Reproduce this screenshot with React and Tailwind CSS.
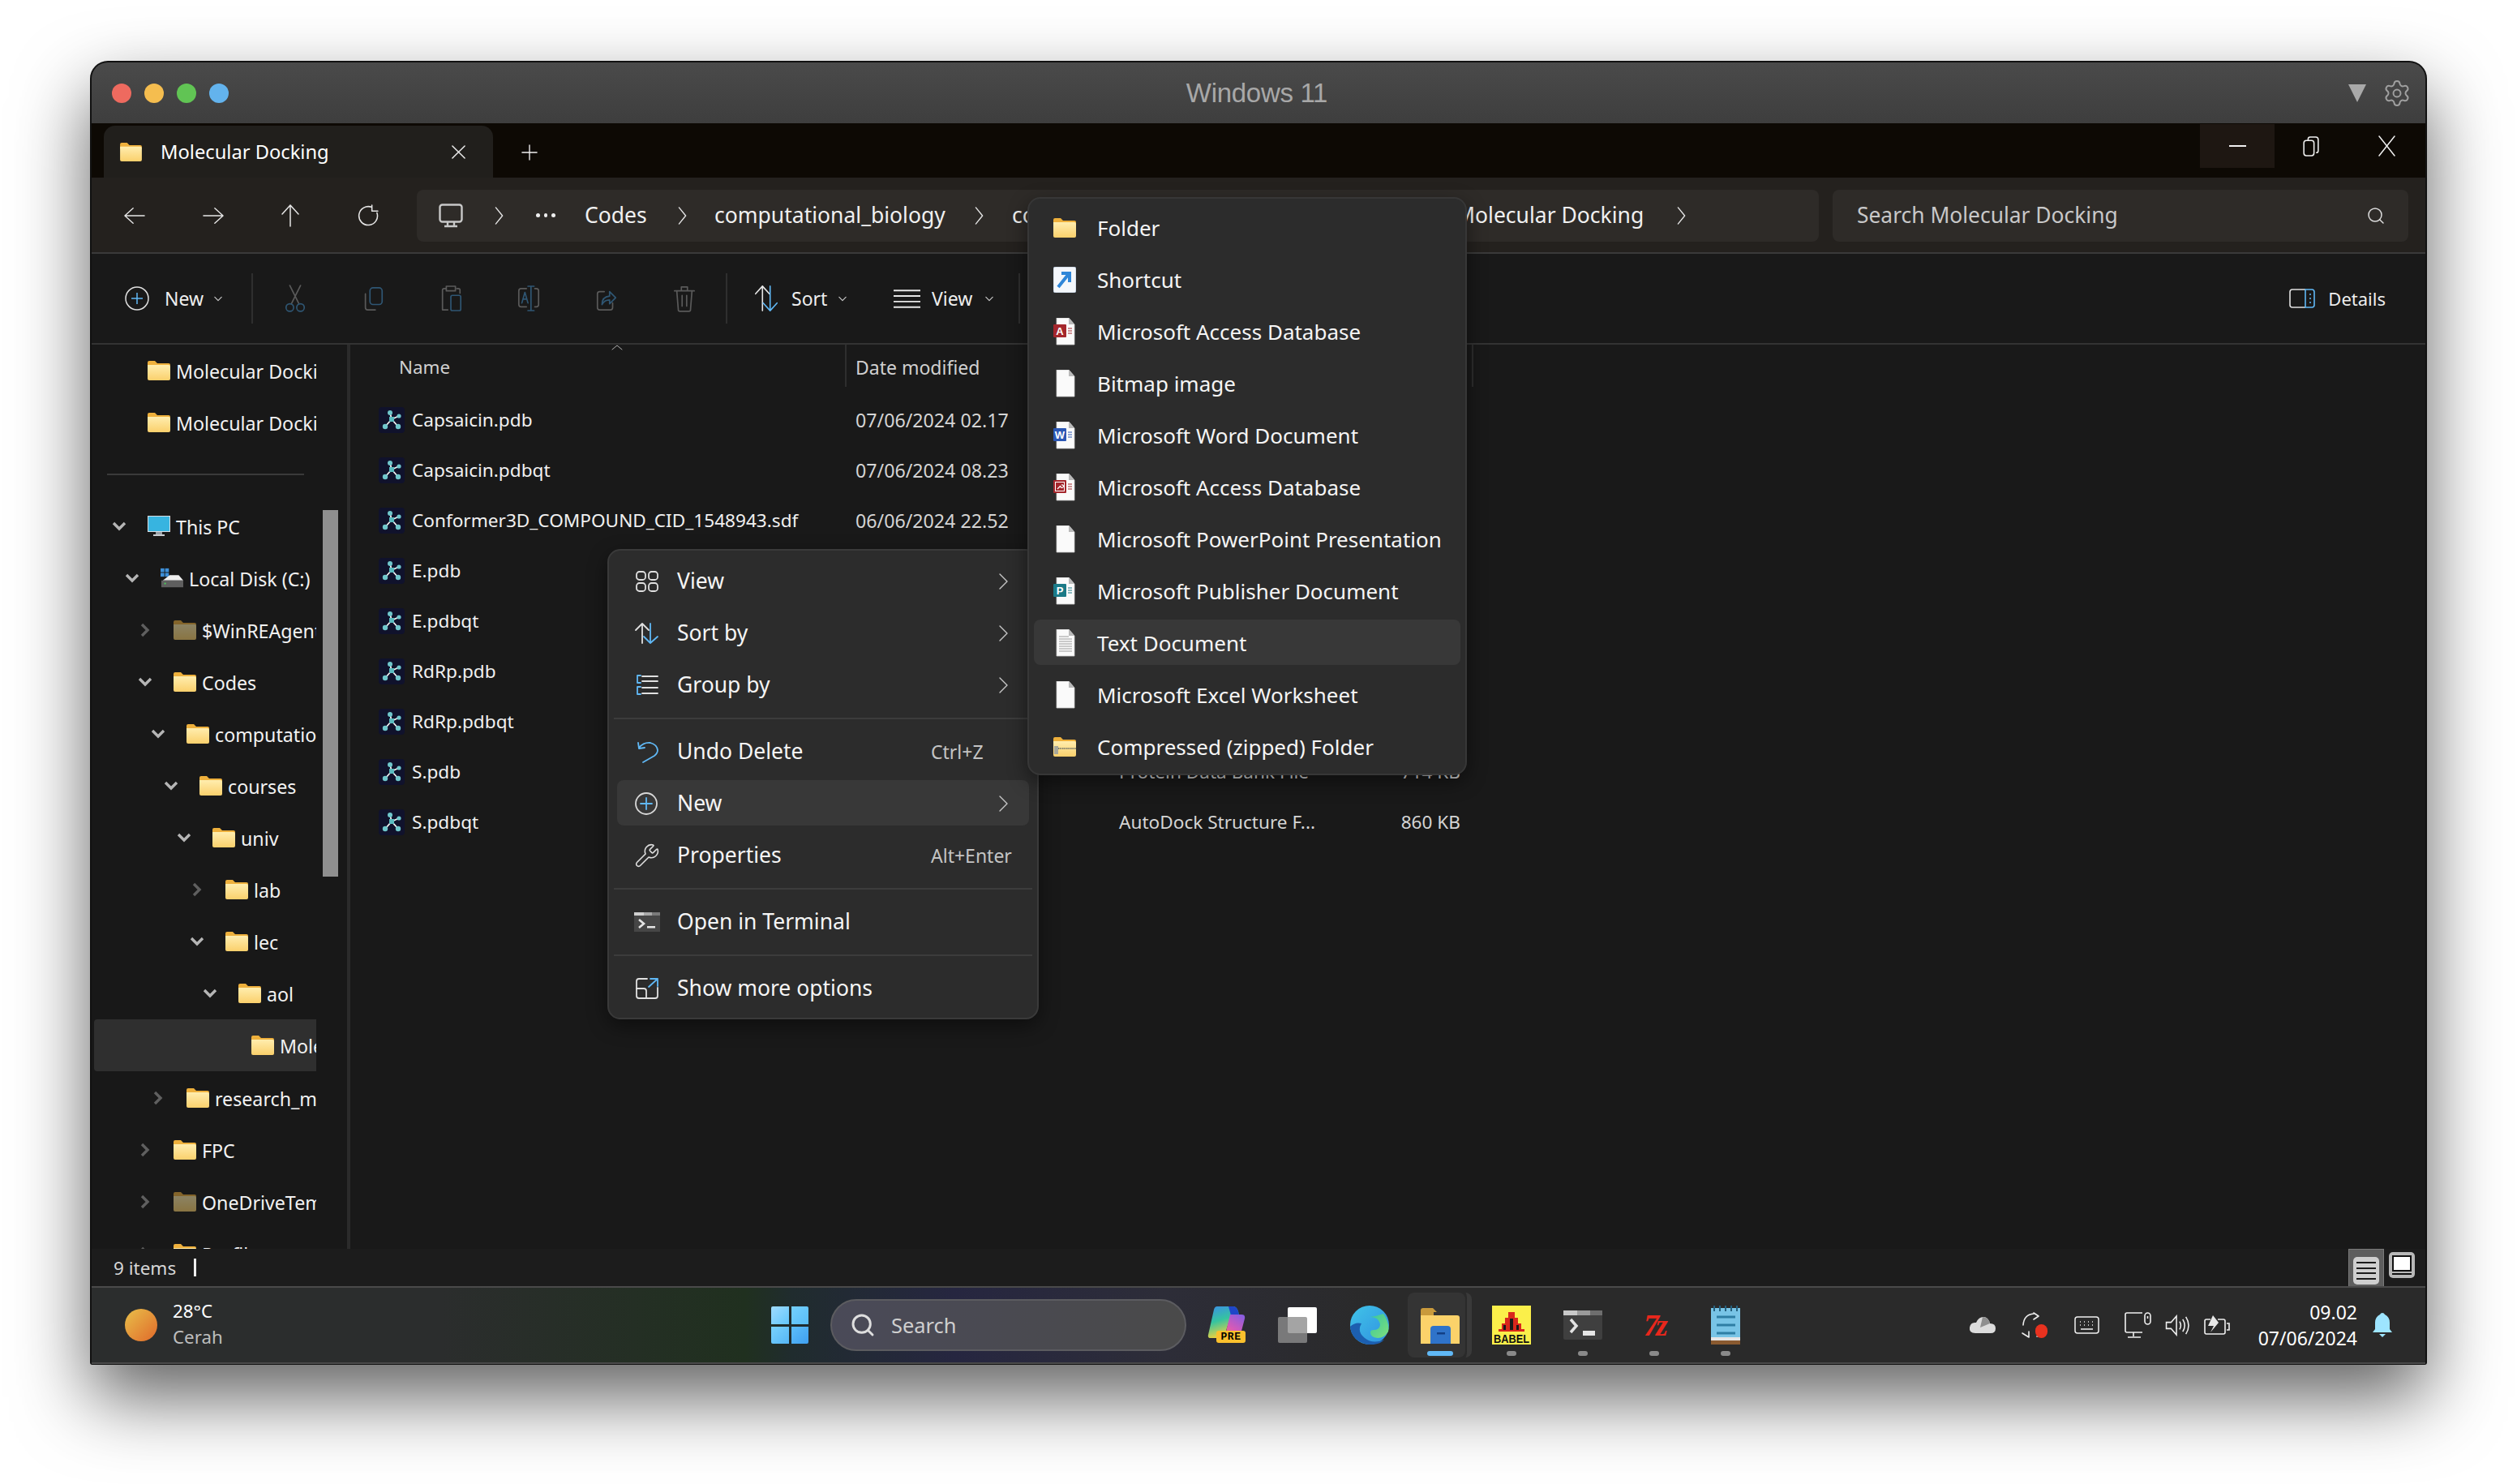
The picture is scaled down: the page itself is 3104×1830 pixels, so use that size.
import { Settings, Search, Wrench } from 'lucide-react';

const blue = '#60b8f5';
const dimA = '#5a5a5a';
const dimB = '#2f5673';

function Folder({ className = 'w-[28px] h-[24px]', dim = false }) {
  return (
    <svg viewBox="0 0 28 24" className={`${className} shrink-0 ${dim ? 'opacity-50' : ''}`}>
      <defs>
        <linearGradient id="fold" x1="0" y1="0" x2="0" y2="1">
          <stop offset="0" stopColor="#ffedae" />
          <stop offset="1" stopColor="#fad06c" />
        </linearGradient>
      </defs>
      <path d="M0 2q0-2 2-2h7l3 3h14q2 0 2 2v3H0z" fill="#eeb03c" />
      <path d="M0 5h26q2 0 2 2v15q0 2-2 2H2q-2 0-2-2z" fill="url(#fold)" />
    </svg>
  );
}

function Chevron({ open, dim }) {
  return (
    <svg viewBox="0 0 24 24" className="w-[24px] h-[24px] shrink-0" fill="none" stroke={dim ? '#5f5f5f' : '#b5b5b5'} strokeWidth="3.4">
      {open ? <path d="M5 8l7 7 7-7" /> : <path d="M8 5l7 7-7 7" />}
    </svg>
  );
}

function Line({ d, color = '#e6e6e6', w = 1.5, className = 'w-[28px] h-[28px]', vb = '0 0 28 28' }) {
  return (
    <svg viewBox={vb} className={`${className} shrink-0`} fill="none" stroke={color} strokeWidth={w} strokeLinecap="round" strokeLinejoin="round">
      <path d={d} />
    </svg>
  );
}

function SmallChev() {
  return <Line d="M1 1l5 5 5-5" vb="0 0 12 7" className="w-[10px] h-[7px]" color="#c8c8c8" w={1.4} />;
}

function Molecule() {
  return (
    <svg viewBox="0 0 32 32" className="w-[32px] h-[32px] shrink-0">
      <rect width="32" height="32" rx="4" fill="#10122c" />
      <path d="M16 15L14 7M16 15L25 11M16 15L8 24M16 15L24 24" stroke="#f3f3f3" strokeWidth="1.8" />
      <circle cx="14" cy="7" r="3" fill="#6fc7cc" />
      <circle cx="25" cy="11" r="2.6" fill="#6fc7cc" />
      <circle cx="8" cy="24" r="3.2" fill="#6fc7cc" />
      <circle cx="24" cy="24" r="3.2" fill="#6fc7cc" />
      <rect x="13" y="12" width="6" height="6" fill="#5bbcc0" />
    </svg>
  );
}

function Page({ badge, badgeColor, lines }) {
  return (
    <svg viewBox="0 0 28 34" className="w-[28px] h-[34px] shrink-0">
      <path d="M4 0h15l7 8v25H4z" fill="#fafafa" stroke="#c9c9c9" strokeWidth="0.8" />
      <path d="M19 0l7 8h-7z" fill="#b9b9b9" />
      {lines && <path d="M7 9h12M7 12h16M7 15h16M7 18h16M7 21h16M7 24h16M7 27h16" stroke="#9a9a9a" strokeWidth="1" />}
      {badge && (
        <>
          <path d="M18 13h5M18 16h5M18 19h5" stroke={badgeColor} strokeWidth="1.2" />
          <rect x="0" y="8" width="16" height="16" rx="1" fill={badgeColor} />
          <text x="8" y="21" textAnchor="middle" fontSize="13" fontWeight="700" fill="#fff" fontFamily="Liberation Sans, sans-serif">{badge}</text>
        </>
      )}
    </svg>
  );
}

function AccessKey() {
  return (
    <svg viewBox="0 0 28 34" className="w-[28px] h-[34px] shrink-0">
      <path d="M4 0h15l7 8v25H4z" fill="#fafafa" stroke="#c9c9c9" strokeWidth="0.8" />
      <path d="M19 0l7 8h-7z" fill="#b9b9b9" />
      <path d="M18 13h5M18 16h5M18 19h5" stroke="#a4262c" strokeWidth="1.2" />
      <rect x="0" y="8" width="16" height="16" rx="1" fill="#a4262c" />
      <rect x="2.5" y="10.5" width="11" height="11" fill="none" stroke="#fff" strokeWidth="1" />
      <path d="M5 19l4-4m0 0a1.8 1.8 0 1 0 1-1" stroke="#fff" strokeWidth="1.2" fill="none" />
    </svg>
  );
}

function Shortcut() {
  return (
    <svg viewBox="0 0 28 32" className="w-[28px] h-[32px] shrink-0">
      <rect width="28" height="32" rx="3" fill="#f4f7fb" stroke="#b9c7d8" />
      <path d="M6 25L18 10M10 8h10v11" fill="none" stroke="#2f86d8" strokeWidth="4" />
    </svg>
  );
}

function ZipFolder() {
  return (
    <div className="relative">
      <Folder className="w-[28px] h-[24px]" />
      <svg viewBox="0 0 28 10" className="absolute left-0 top-[11px] w-[28px] h-[10px]">
        <path d="M6 3h22" stroke="#7a7a6a" strokeWidth="2" strokeDasharray="1.5 1" />
        <rect x="1" y="0" width="5" height="10" fill="#a7a79a" />
      </svg>
    </div>
  );
}

const tree = [
  ['Molecular Docking', 0, null],
  ['Molecular Docking', 0, null],
  'sep',
  ['This PC', 0, 'open', 'pc'],
  ['Local Disk (C:)', 1, 'open', 'disk'],
  ['$WinREAgent', 2, 'closed', 'dim'],
  ['Codes', 2, 'open'],
  ['computational_biology', 3, 'open'],
  ['courses', 4, 'open'],
  ['univ', 5, 'open'],
  ['lab', 6, 'closed'],
  ['lec', 6, 'open'],
  ['aol', 7, 'open'],
  ['Molecular Docking', 8, null, 'sel'],
  ['research_methods', 3, 'closed'],
  ['FPC', 2, 'closed'],
  ['OneDriveTemp', 2, 'closed', 'dim'],
  ['Profiles', 2, 'closed'],
];

function TreeRow({ label, depth, state, kind }) {
  return (
    <div
      className={`flex items-center h-[64px] text-[23.2px] whitespace-nowrap text-[#f2f2f2] overflow-hidden w-[274px] ml-[3px] ${kind === 'sel' ? 'bg-[#2f2f2f] h-[63px] mb-[1px] rounded-l-[4px]' : ''}`}
      style={{ paddingLeft: 19 + depth * 16 }}
    >
      <div className="w-[24px] h-[24px] shrink-0">{state && <Chevron open={state === 'open'} dim={state === 'closed'} />}</div>
      <div className="ml-[23px] mr-[7px] shrink-0">
        {kind === 'pc' && (
          <svg viewBox="0 0 28 26" className="w-[28px] h-[26px]">
            <rect width="28" height="20" fill="#d8dde2" />
            <rect x="1" y="1" width="26" height="18" fill="#37b4e0" />
            <rect x="10" y="20" width="8" height="3" fill="#9aa0a6" />
            <rect x="7" y="23" width="14" height="2" fill="#c8ccd0" />
          </svg>
        )}
        {kind === 'disk' && (
          <svg viewBox="0 0 30 26" className="w-[28px] h-[26px]">
            <rect x="0" y="0" width="5" height="5" fill="#3d8fd8" />
            <rect x="6" y="0" width="5" height="5" fill="#3d8fd8" />
            <rect x="0" y="6" width="5" height="5" fill="#3d8fd8" />
            <rect x="6" y="6" width="5" height="5" fill="#3d8fd8" />
            <path d="M3 16l9-7h12l6 7z" fill="#efefef" />
            <rect x="1" y="16" width="29" height="9" fill="#5f5f5f" />
            <circle cx="6" cy="20" r="1.2" fill="#48d05a" />
          </svg>
        )}
        {(kind === undefined || kind === 'dim' || kind === 'sel') && <Folder dim={kind === 'dim'} />}
      </div>
      <span className="pt-[2px]">{label}</span>
    </div>
  );
}

const files = [
  ['Capsaicin.pdb', '07/06/2024 02.17'],
  ['Capsaicin.pdbqt', '07/06/2024 08.23'],
  ['Conformer3D_COMPOUND_CID_1548943.sdf', '06/06/2024 22.52'],
  ['E.pdb'],
  ['E.pdbqt'],
  ['RdRp.pdb'],
  ['RdRp.pdbqt'],
  ['S.pdb', '', 'Protein Data Bank File', '714 KB'],
  ['S.pdbqt', '', 'AutoDock Structure F...', '860 KB'],
];

function ToolIcon({ children, w = 'w-[96px]' }) {
  return <div className={`${w} h-[44px] flex items-center justify-center shrink-0`}>{children}</div>;
}

function ToolSvg({ children }) {
  return (
    <svg viewBox="0 0 32 36" className="w-[30px] h-[34px]" fill="none" strokeWidth="1.8" strokeLinecap="round" strokeLinejoin="round">
      {children}
    </svg>
  );
}

function MenuRow({ icon, label, hint, more, active }) {
  return (
    <div className={`flex items-center h-[64px] ${active ? 'relative' : ''}`}>
      {active && <div className="absolute left-[10px] right-[10px] top-[3px] bottom-[5px] bg-[#383838] rounded-[8px]" />}
      <div className="relative w-[32px] ml-[31px] flex justify-center shrink-0">{icon}</div>
      <span className="relative ml-[21px] text-[26.5px] text-[#f5f5f5] whitespace-nowrap">{label}</span>
      {hint && <span className="absolute left-[397px] text-[23px] text-[#c4c4c4] whitespace-nowrap">{hint}</span>}
      {more && (
        <div className="absolute left-[481px]">
          <Line d="M1 1l9 9-9 9" vb="0 0 11 20" className="w-[11px] h-[20px]" color="#c8c8c8" w={1.4} />
        </div>
      )}
    </div>
  );
}

function MenuIconSvg({ children }) {
  return (
    <svg viewBox="0 0 32 28" className="w-[32px] h-[28px]" fill="none" strokeWidth="1.8" strokeLinecap="round" strokeLinejoin="round">
      {children}
    </svg>
  );
}

function Sep() {
  return <div className="h-[2px] bg-[#3c3c3c] mx-[6px] my-[8px]" />;
}

function SubRow({ icon, label, active }) {
  return (
    <div className="relative flex items-center h-[64px]">
      {active && <div className="absolute left-[6px] right-[6px] top-[3px] bottom-[5px] bg-[#383838] rounded-[8px]" />}
      <div className="relative ml-[30px] w-[28px] flex justify-center shrink-0">{icon}</div>
      <span className="relative ml-[26px] text-[26px] text-[#f5f5f5] whitespace-nowrap">{label}</span>
    </div>
  );
}

function Dot() {
  return <div className="absolute left-1/2 -translate-x-1/2 top-[56px] w-[12px] h-[6px] rounded-full bg-[#8a8a8a]" />;
}

export default function App() {
  return (
    <div className="w-[3104px] h-[1830px] bg-white pt-[75px] pl-[111px] overflow-hidden font-['Noto_Sans','Liberation_Sans',sans-serif]">
      <div className="relative w-[2882px] flex flex-col border-2 border-b-[1px] border-[#111] rounded-t-[22px] rounded-b-[3px] shadow-[0_40px_90px_rgba(0,0,0,0.62)] bg-[#191919]">
        {/* mac title bar */}
        <div className="h-[75px] flex items-center rounded-t-[20px] bg-[linear-gradient(#4a4a4a,#3e3e3e)] pl-[25px] relative">
          <div className="w-[24px] h-[24px] rounded-full bg-[#ee6a5f] mr-[16px]" />
          <div className="w-[24px] h-[24px] rounded-full bg-[#f5bd4f] mr-[16px]" />
          <div className="w-[24px] h-[24px] rounded-full bg-[#61c454] mr-[16px]" />
          <div className="w-[24px] h-[24px] rounded-full bg-[#63b3ed]" />
          <div className="flex-1 text-center pr-[78px] text-[33px] text-[#a8a8a8] font-['Liberation_Sans',sans-serif] tracking-[-0.3px]">Windows 11</div>
          <svg viewBox="0 0 22 22" className="w-[22px] h-[22px] mr-[20px]"><path d="M0 0h22L11 22z" fill="#a9a9a9" /></svg>
          <Settings className="w-[36px] h-[36px] text-[#a0a0a0] mr-[17px]" strokeWidth={1.3} />
        </div>

        {/* tabs */}
        <div className="h-[67px] flex bg-[#0d0904]">
          <div className="ml-[15px] mt-[3px] w-[480px] h-[64px] rounded-t-[14px] bg-[#211f1c] flex items-center pl-[19px]">
            <Folder className="w-[29px] h-[23px]" />
            <span className="ml-[22px] pt-[2px] text-[23.7px] text-white whitespace-nowrap w-[358px]">Molecular Docking</span>
            <Line d="M2 2l16 16M18 2L2 18" vb="0 0 20 20" className="w-[19px] h-[19px]" color="#f0f0f0" />
          </div>
          <div className="ml-[35px] mt-[26px] h-[22px]">
            <Line d="M11 1v20M1 11h20" vb="0 0 22 22" className="w-[20px] h-[20px]" color="#f0f0f0" />
          </div>
          <div className="ml-auto flex h-[54px] mt-[1px]">
            <div className="w-[92px] bg-[#1e1712] flex items-center justify-center"><div className="w-[21px] h-[2px] bg-[#f0f0f0]" /></div>
            <div className="w-[90px] flex items-center justify-center">
              <Line d="M6 5V3.5Q6 1 8.5 1H15q3 0 3 3v13q0 2.5-2 2.5M1 8q0-3 3-3h6q3 0 3 3v12q0 3-3 3H4q-3 0-3-3z" vb="0 0 19 24" className="w-[20px] h-[25px]" color="#f0f0f0" />
            </div>
            <div className="w-[96px] flex items-center justify-center">
              <Line d="M1 1l19 24M20 1L1 25" vb="0 0 21 26" className="w-[21px] h-[26px]" color="#f0f0f0" />
            </div>
          </div>
        </div>

        {/* address row */}
        <div className="h-[94px] flex items-center bg-[#24211e] border-b-2 border-[#3a3a3a] text-[#f0f0f0]">
          <div className="w-[401px] flex items-center shrink-0 mt-[1px]">
            <div className="ml-[40px]"><Line d="M1 12h26M12 2L1 12l11 10" vb="0 0 28 24" className="w-[26px] h-[24px]" /></div>
            <div className="ml-[71px]"><Line d="M1 12h26M16 2l11 10-11 10" vb="0 0 28 24" className="w-[26px] h-[24px]" /></div>
            <div className="ml-[70px]"><Line d="M12 27V1M2 12L12 1l10 11" vb="0 0 24 28" className="w-[24px] h-[28px]" /></div>
            <div className="ml-[71px]"><Line d="M17 3.5A11 11 0 1 0 23 10M17 1v7h7" vb="0 0 26 26" className="w-[27px] h-[27px]" /></div>
          </div>
          <div className="w-[1729px] h-[64px] mt-[1px] rounded-[8px] bg-[#2e2b28] flex items-center text-[26.5px] whitespace-nowrap overflow-hidden shrink-0">
            <div className="ml-[27px]">
              <svg viewBox="0 0 30 30" className="w-[30px] h-[30px]" fill="none" stroke="#c8c8c8" strokeWidth="2.4">
                <rect x="1.5" y="1.5" width="27" height="21" rx="3" />
                <path d="M11 23v4M19 23v4M7 28h16" />
              </svg>
            </div>
            <div className="ml-[38px]"><Line d="M2 1l9 11-9 11" vb="0 0 13 24" className="w-[13px] h-[22px]" /></div>
            <div className="ml-[39px] flex gap-[5px] w-[24px]">
              <div className="w-[5px] h-[5px] rounded-full bg-[#eee]" /><div className="w-[5px] h-[5px] rounded-full bg-[#eee]" /><div className="w-[5px] h-[5px] rounded-full bg-[#eee]" />
            </div>
            <span className="ml-[36px] w-[77px]">Codes</span>
            <div className="ml-[37px]"><Line d="M2 1l9 11-9 11" vb="0 0 13 24" className="w-[13px] h-[22px]" /></div>
            <span className="ml-[33px] w-[284px]">computational_biology</span>
            <div className="ml-[36px]"><Line d="M2 1l9 11-9 11" vb="0 0 13 24" className="w-[13px] h-[22px]" /></div>
            <span className="ml-[34px] w-[547px] overflow-hidden">courses</span>
            <span className="w-[234px]">Molecular Docking</span>
            <div className="ml-[38px]"><Line d="M2 1l9 11-9 11" vb="0 0 13 24" className="w-[13px] h-[22px]" /></div>
          </div>
          <div className="ml-[17px] w-[710px] h-[64px] mt-[1px] rounded-[8px] bg-[#2e2b28] flex items-center pl-[30px] pr-[28px] shrink-0">
            <span className="text-[26.4px] text-[#c8c8c8] whitespace-nowrap">Search Molecular Docking</span>
            <Search className="ml-auto w-[24px] h-[24px] text-[#dddddd]" strokeWidth={1.5} />
          </div>
        </div>

        {/* command bar */}
        <div className="h-[112px] flex items-center bg-[#191919] border-b-2 border-[#333] text-[23px] text-[#eeeeee]">
          <svg viewBox="0 0 30 30" className="ml-[41px] w-[30px] h-[30px]" fill="none" strokeWidth="1.5">
            <circle cx="15" cy="15" r="14" stroke="#e0e0e0" />
            <path d="M15 8v14M8 15h14" stroke={blue} />
          </svg>
          <span className="ml-[19px] w-[48px]">New</span>
          <div className="ml-[13px]"><SmallChev /></div>
          <div className="ml-[36px] w-[2px] h-[62px] bg-[#2f2f2f]" />
          <div className="flex ml-[4px]">
            <ToolIcon>
              <ToolSvg>
                <path d="M9 1l12 24M23 1L11 25" stroke={dimA} />
                <circle cx="9" cy="30" r="5" stroke={dimB} />
                <circle cx="23" cy="30" r="5" stroke={dimB} />
              </ToolSvg>
            </ToolIcon>
            <ToolIcon>
              <ToolSvg>
                <path d="M6 12v18q0 3 3 3h10" stroke={dimA} />
                <rect x="12" y="4" width="16" height="22" rx="4" stroke={dimB} />
              </ToolSvg>
            </ToolIcon>
            <ToolIcon>
              <ToolSvg>
                <path d="M10 5H7Q5 5 5 7v26h7M24 5h2q2 0 2 2v4M10 2h12v6H10z" stroke={dimA} />
                <rect x="16" y="14" width="13" height="20" rx="2" stroke={dimB} />
              </ToolSvg>
            </ToolIcon>
            <ToolIcon>
              <ToolSvg>
                <path d="M13 5H6Q3 5 3 8v18q0 3 3 3h7M24 5h2q3 0 3 3v18q0 3-3 3h-2" stroke={dimA} />
                <path d="M19 2v32M15 2h8M15 34h8M7 24l4-14 4 14M8.5 19h5" stroke={dimB} />
              </ToolSvg>
            </ToolIcon>
            <ToolIcon>
              <ToolSvg>
                <path d="M4 12v18q0 3 3 3h14q3 0 3-3v-6M4 12q0-3 3-3h6" stroke={dimA} />
                <path d="M10 26q0-10 10-11V9l8 8-8 8v-5q-7 0-10 6z" stroke={dimB} />
              </ToolSvg>
            </ToolIcon>
            <ToolIcon>
              <ToolSvg>
                <path d="M3 8h26M12 8V3h8v5M6 8l2 25q0 2 2 2h12q2 0 2-2l2-25M13 14v14M19 14v14" stroke={dimA} />
              </ToolSvg>
            </ToolIcon>
          </div>
          <div className="ml-[3px] w-[2px] h-[62px] bg-[#2f2f2f]" />
          <div className="ml-[32px]">
            <svg viewBox="0 0 32 36" className="w-[32px] h-[34px]" fill="none" strokeWidth="1.7" strokeLinecap="round" strokeLinejoin="round">
              <path d="M11 34V2M2 12L11 2l9 10" stroke="#e6e6e6" />
              <path d="M21 2v32M12 24l9 10 9-10" stroke={blue} />
            </svg>
          </div>
          <span className="ml-[15px] w-[46px]">Sort</span>
          <div className="ml-[12px]"><SmallChev /></div>
          <div className="ml-[58px]">
            <svg viewBox="0 0 34 24" className="w-[33px] h-[24px]" fill="none" stroke="#e6e6e6" strokeWidth="2">
              <path d="M0 2h34M0 9h34M0 16h34M0 23h34" />
            </svg>
          </div>
          <span className="ml-[14px] w-[54px]">View</span>
          <div className="ml-[12px]"><SmallChev /></div>
          <div className="ml-[31px] w-[2px] h-[62px] bg-[#2f2f2f]" />
          <div className="ml-auto flex items-center mr-[49px]">
            <svg viewBox="0 0 32 24" className="w-[32px] h-[24px]" fill="none" strokeWidth="1.6">
              <path d="M20 1H4Q1 1 1 4v16q0 3 3 3h16" stroke="#e0e0e0" />
              <path d="M20 1h8q3 0 3 3v16q0 3-3 3h-8zM25 7h2M25 12h2M25 17h2" stroke={blue} />
            </svg>
            <span className="ml-[16px] text-[22px]">Details</span>
          </div>
        </div>

        {/* main */}
        <div className="h-[1115px] flex overflow-hidden">
          <div className="w-[315px] shrink-0 relative bg-[#181818] overflow-hidden">
            {tree.map((t, i) =>
              t === 'sep' ? (
                <div key={i} className="ml-[19px] w-[243px] h-[2px] bg-[#3a3a3a] my-[31px]" />
              ) : (
                <TreeRow key={i} label={t[0]} depth={t[1]} state={t[2]} kind={t[3]} />
              )
            )}
            {/* scrollbar thumb */}
            <div className="absolute left-[285px] top-[204px] w-[19px] h-[452px] bg-[#8f8f8f]" />
          </div>
          <div className="w-[4px] bg-[#2b2b2b] shrink-0" />
          <div className="flex-1 bg-[#191919] relative">
            <div className="flex h-[52px] text-[22.4px] text-[#d0d0d0]">
              <div className="w-[610px] pl-[60px] pt-[11px]">Name</div>
              <div className="w-[775px] border-l-2 border-r-2 border-[#2e2e2e] pl-[11px] pt-[11px] text-[23px] whitespace-nowrap">Date modified</div>
            </div>
            <div className="absolute left-[322px] top-[0px]">
              <Line d="M1 6l6-5 6 5" vb="0 0 14 7" className="w-[14px] h-[7px]" color="#b0b0b0" w={1} />
            </div>
            <div className="mt-[10px] text-[22.6px] text-[#f0f0f0]">
              {files.map((f) => (
                <div key={f[0]} className="flex items-center h-[62px] whitespace-nowrap">
                  <div className="w-[610px] flex items-center pl-[35px]">
                    <Molecule />
                    <span className="ml-[9px]">{f[0]}</span>
                  </div>
                  <div className="w-[338px] pl-[13px] text-[23.2px] text-[#d4d4d4]">{f[1]}</div>
                  <div className="w-[300px] text-[#d4d4d4]">{f[2]}</div>
                  <div className="w-[121px] text-right text-[#d4d4d4]">{f[3]}</div>
                </div>
              ))}
            </div>
          </div>
        </div>

        {/* status bar */}
        <div className="h-[46px] flex items-center bg-[#1c1c1c] text-[22.5px] text-[#d6d6d6]">
          <span className="ml-[27px] pt-[2px] w-[77px] whitespace-nowrap">9 items</span>
          <div className="ml-[22px] w-[3px] h-[22px] bg-[#eeeeee]" />
          <div className="ml-auto h-full w-[44px] bg-[#5e5e5e] border border-b-0 border-[#7a7a7a] flex items-center justify-center mr-[6px]">
            <svg viewBox="0 0 32 34" className="w-[32px] h-[34px] mt-[6px]">
              <rect width="32" height="34" rx="5" fill="#cfcfcf" />
              <path d="M4 7h24M4 14h24M4 20h24M4 27h24" stroke="#1c1c1c" strokeWidth="2" />
            </svg>
          </div>
          <svg viewBox="0 0 32 32" className="w-[32px] h-[32px] mr-[13px] mb-[6px]">
            <rect width="32" height="32" rx="5" fill="#b8b8b8" />
            <rect x="4" y="4" width="24" height="20" fill="#111" />
            <rect x="6" y="6" width="20" height="16" fill="#fff" />
            <rect x="4" y="26" width="24" height="2" fill="#111" />
          </svg>
        </div>

        {/* taskbar */}
        <div className="relative h-[96px] flex items-center border-t-2 border-[#4a4a4a] border-b-2 bg-[linear-gradient(90deg,#2b2d2d_0%,#2b2d2d_15%,#20301f_28%,#202c2e_30%,#262640_37%,#2d2d38_46%,#2a2a2a_55%,#2a2a2a_100%)]">
          <div className="ml-[41px] w-[40px] h-[40px] rounded-full bg-[linear-gradient(135deg,#e8c04a,#e0692a)] shrink-0" />
          <div className="ml-[19px] w-[120px] shrink-0 leading-[32px] text-[22.3px] -mt-[3px]">
            <div className="text-white">28°C</div>
            <div className="text-[#bdbdbd]">Cerah</div>
          </div>
          <div className="ml-[618px] grid grid-cols-2 gap-[3px] w-[46px] h-[46px] shrink-0">
            <div className="rounded-tl-[2px] bg-[linear-gradient(135deg,#9fdcff,#62c6fb)]" />
            <div className="rounded-tr-[2px] bg-[linear-gradient(135deg,#74d0fd,#58bdf8)]" />
            <div className="rounded-bl-[2px] bg-[linear-gradient(135deg,#79d2fd,#55b6f6)]" />
            <div className="rounded-br-[2px] bg-[linear-gradient(135deg,#5cbefa,#3f9ff0)]" />
          </div>
          <div className="ml-[27px] w-[439px] h-[64px] rounded-full border-2 border-[#5c5c60] bg-[linear-gradient(90deg,#4a4a58,#4a4a4a)] flex items-center pl-[22px] shrink-0">
            <Search className="w-[32px] h-[32px] text-[#dedede]" strokeWidth={2.2} />
            <span className="ml-[19px] text-[25.4px] text-[#cfcfcf]">Search</span>
          </div>
          {/* copilot */}
          <div className="relative ml-[26px] w-[47px] h-[48px] shrink-0">
            <svg viewBox="0 0 47 46" className="w-[47px] h-[46px]">
              <defs>
                <linearGradient id="copL" x1="0" y1="0" x2="0.3" y2="1">
                  <stop offset="0" stopColor="#3b8de8" />
                  <stop offset="0.5" stopColor="#35c4a0" />
                  <stop offset="1" stopColor="#f2d23c" />
                </linearGradient>
                <linearGradient id="copR" x1="0.8" y1="0" x2="0.2" y2="1">
                  <stop offset="0" stopColor="#8a5ee0" />
                  <stop offset="0.6" stopColor="#d95ab5" />
                  <stop offset="1" stopColor="#f08a4a" />
                </linearGradient>
              </defs>
              <path d="M12 1h20q4 0 6 6l1 5H29l-8 25q-1 3-4 3H4q-4 0-3-4L8 5q1-4 4-4z" fill="url(#copL)" />
              <path d="M26 1h6q4 0 6 6l1 5H29z" fill="#1f46c8" />
              <path d="M28 11h14q5 0 4 5l-5 19q-1 5-6 5H18q3 0 4-4z" fill="url(#copR)" />
            </svg>
            <div className="absolute left-[11px] top-[31px] w-[36px] h-[15px] rounded-[3px] bg-[#fbc02d] flex items-center justify-center text-[13px] font-bold text-black tracking-[0.5px] leading-none font-['Liberation_Mono',monospace]">PRE</div>
          </div>
          {/* task view */}
          <div className="relative ml-[40px] w-[48px] h-[44px] shrink-0">
            <div className="absolute left-[12px] top-0 w-[36px] h-[32px] rounded-[2px] bg-white" />
            <div className="absolute left-0 top-[12px] w-[36px] h-[32px] rounded-[2px] bg-[#8d8d8d]/80" />
          </div>
          {/* edge */}
          <svg viewBox="0 0 48 48" className="ml-[41px] w-[48px] h-[48px] shrink-0">
            <defs>
              <linearGradient id="edgeA" x1="0" y1="0" x2="1" y2="1">
                <stop offset="0" stopColor="#40c4e8" />
                <stop offset="1" stopColor="#2f8fe0" />
              </linearGradient>
              <linearGradient id="edgeB" x1="0" y1="0" x2="1" y2="1">
                <stop offset="0" stopColor="#36c6a0" />
                <stop offset="1" stopColor="#7fe07a" />
              </linearGradient>
            </defs>
            <circle cx="24" cy="24" r="24" fill="url(#edgeA)" />
            <path d="M0 26Q2 44 22 48q14 1 20-6-14 6-24-2T14 22q-8-2-14 4z" fill="#1c5fb0" />
            <path d="M24 14q12 0 13 10-1 6-8 6-4 0-4 3 0 6 9 7 8 0 13-8 2-10-6-22-8 3-17 4z" fill="url(#edgeB)" />
          </svg>
          {/* explorer */}
          <div className="relative ml-[23px] w-[79px] h-[80px] shrink-0">
            <div className="absolute left-0 top-0 w-[79px] h-[80px] rounded-[8px] border-r-[6px] border-[#3a3a3a]" />
            <div className="absolute left-0 top-0 w-[71px] h-[80px] rounded-[8px] bg-[#343434]" />
            <svg viewBox="0 0 48 44" className="absolute left-[16px] top-[19px] w-[48px] h-[44px]">
              <path d="M0 3q0-3 3-3h12l5 5h-4v7H0z" fill="#c99a3c" />
              <path d="M0 9h45q3 0 3 3v32H0z" fill="#fbd26a" />
              <path d="M12 26q0-4 4-4h17q4 0 4 4v18H12z" fill="#2f73c9" />
              <rect x="20" y="30" width="10" height="2.5" fill="#123f85" />
            </svg>
            <div className="absolute left-[24px] top-[72px] w-[32px] h-[6px] rounded-[3px] bg-[#60b8f5]" />
          </div>
          {/* babel */}
          <div className="relative ml-[25px] w-[48px] shrink-0 h-[48px]">
            <svg viewBox="0 0 48 48" className="w-[48px] h-[48px]">
              <rect width="48" height="48" fill="#fbef4a" />
              <path d="M24 2v6M20 8h8v7h4v7h4v7h4v3H8v-3h4v-7h4v-7h4z" fill="#d9271c" />
              <path d="M14 24h3v6h-3zM22 16h4v14h-4zM30 24h3v6h-3z" fill="#1a1a1a" />
              <text x="24" y="46" textAnchor="middle" fontSize="14" fontWeight="700" fill="#111" textLength="44" lengthAdjust="spacingAndGlyphs" fontFamily="Liberation Sans, sans-serif">BABEL</text>
            </svg>
            <Dot />
          </div>
          {/* terminal */}
          <div className="relative ml-[40px] w-[48px] shrink-0 h-[48px]">
            <svg viewBox="0 0 48 36" className="w-[48px] h-[36px] mt-[6px]">
              <rect width="48" height="36" rx="2" fill="#3f3f3f" />
              <rect width="17" height="6" fill="#c8c8c8" />
              <rect x="17" width="16" height="6" fill="#9a9a9a" />
              <rect x="33" width="15" height="6" fill="#6e6e6e" />
              <path d="M9 11l7 8-7 8" stroke="#e2e2e2" strokeWidth="3.5" fill="none" />
              <rect x="24" y="25" width="15" height="6" fill="#e6e6e6" />
            </svg>
            <Dot />
          </div>
          {/* 7z */}
          <div className="relative ml-[45px] w-[38px] shrink-0 h-[48px] flex items-center justify-center">
            <span className="text-[38px] leading-none font-bold italic text-[#e8271c] font-['Liberation_Serif',serif] tracking-[-4px]">7z</span>
            <Dot />
          </div>
          {/* notepad */}
          <div className="relative ml-[51px] w-[36px] shrink-0 h-[48px]">
            <svg viewBox="0 0 36 48" className="w-[36px] h-[48px]">
              <rect y="3" width="36" height="38" fill="#78c4e6" />
              <rect y="39" width="36" height="4" fill="#e6e6e6" />
              <rect y="43" width="36" height="5" fill="#8a5a30" />
              <path d="M4 0v7M11 0v7M18 0v7M25 0v7M32 0v7" stroke="#24607e" strokeWidth="2" />
              <path d="M7 14h23M7 24h23M7 34h23" stroke="#2e7ea4" strokeWidth="3" />
            </svg>
            <Dot />
          </div>

          {/* tray */}
          <svg viewBox="0 0 34 22" className="ml-[282px] w-[34px] h-[22px] shrink-0">
            <path d="M8 21Q0 21 1 14T9 8Q12 1 18 1t8 8q7 0 7 6t-6 6z" fill="#dcdcdc" />
            <path d="M17 1Q24 1 26 9L14 14z" fill="#8f8f8f" />
          </svg>
          <div className="relative ml-[31px] w-[34px] h-[32px] shrink-0">
            <Line d="M15 2Q3 3 2 16M1 26l8 5v-7M19 30Q25 29 28 24M15 1l6 4-6 4" vb="0 0 34 32" className="w-[34px] h-[32px]" color="#ededed" w={1.6} />
            <div className="absolute left-[17px] top-[15px] w-[15px] h-[17px] rounded-full bg-[#e8321f]" />
          </div>
          <svg viewBox="0 0 31 22" className="ml-[31px] w-[31px] h-[22px] shrink-0" fill="none" stroke="#f0f0f0" strokeWidth="1.5">
            <rect x="1" y="1" width="29" height="20" rx="3" />
            <path d="M7 7h1M12 7h1M17 7h1M22 7h1M7 11h1M12 11h1M17 11h1M22 11h1M8 16h15" />
          </svg>
          <svg viewBox="0 0 33 32" className="ml-[31px] w-[33px] h-[32px] shrink-0" fill="none" stroke="#f0f0f0" strokeWidth="1.6">
            <path d="M22 1H3Q1 1 1 3v20q0 2 2 2h19M11 25v5M4 31h16" />
            <rect x="25" y="1" width="7" height="14" rx="3.5" />
            <path d="M28.5 5v3" />
          </svg>
          <svg viewBox="0 0 32 28" className="ml-[17px] w-[32px] h-[27px] shrink-0" fill="none" stroke="#f0f0f0" strokeWidth="1.6">
            <path d="M1 10h6l7-8v24l-7-8H1zM18 9q3 5 0 10M22 6q5 8 0 16M26 3q7 11 0 22" />
          </svg>
          <svg viewBox="0 0 32 26" className="ml-[16px] w-[32px] h-[26px] shrink-0" fill="none" stroke="#f0f0f0" strokeWidth="1.6">
            <path d="M8 6H3Q1 6 1 8v14q0 2 2 2h21q2 0 2-2V8q0-2-2-2h-7M28 11h3v8h-3" />
            <path d="M11 1L5 14h7l-4 8 10-12" fill="#e8e8e8" stroke="none" />
          </svg>
          <div className="ml-[34px] w-[123px] text-[23px] leading-[32px] text-white text-right shrink-0 whitespace-nowrap">
            <div>09.02</div>
            <div>07/06/2024</div>
          </div>
          <svg viewBox="0 0 26 30" className="ml-[18px] w-[26px] h-[30px] shrink-0">
            <path d="M13 0q2 0 3 2 6 3 6 10v8l3 4H1l3-4v-8q0-7 6-10 1-2 3-2z" fill="#9ee5ff" />
            <path d="M9 26h8l-4 4z" fill="#9ee5ff" />
          </svg>
        </div>

        {/* context menu */}
        <div className="absolute left-[636px] top-[600px] w-[532px] h-[580px] rounded-[16px] bg-[#2c2c2c] border-2 border-[#3a3a3a] pt-[6px] shadow-[0_8px_24px_rgba(0,0,0,0.45)]">
          <MenuRow label="View" more icon={
            <MenuIconSvg>
              <rect x="3" y="2" width="11" height="10" rx="3.5" stroke="#e0e0e0" />
              <rect x="18" y="2" width="11" height="10" rx="3.5" stroke="#e0e0e0" />
              <rect x="3" y="16" width="11" height="10" rx="3.5" stroke="#e0e0e0" />
              <rect x="18" y="16" width="11" height="10" rx="3.5" stroke="#e0e0e0" />
            </MenuIconSvg>
          } />
          <MenuRow label="Sort by" more icon={
            <MenuIconSvg>
              <path d="M10 26V2M2 10l8-8 8 8" stroke="#e0e0e0" />
              <path d="M20 2v24M12 18l8 8 9-8" stroke={blue} />
            </MenuIconSvg>
          } />
          <MenuRow label="Group by" more icon={
            <MenuIconSvg>
              <path d="M8 2H4v9h4M8 16H4v9h4" stroke={blue} />
              <path d="M10 3h19M10 9h19M10 17h19M10 24h19" stroke="#e0e0e0" />
            </MenuIconSvg>
          } />
          <Sep />
          <MenuRow label="Undo Delete" hint="Ctrl+Z" icon={
            <MenuIconSvg>
              <path d="M5 3l1 7 7-1M6 9q6-7 14-6 8 2 9 9 0 4-4 7l-14 8" stroke={blue} />
            </MenuIconSvg>
          } />
          <MenuRow label="New" more active icon={
            <MenuIconSvg>
              <circle cx="15" cy="14" r="13" stroke="#d8d8d8" />
              <path d="M15 7v14M8 14h14" stroke={blue} />
            </MenuIconSvg>
          } />
          <MenuRow label="Properties" hint="Alt+Enter" icon={<Wrench className="w-[32px] h-[32px] text-[#dedede]" strokeWidth={1.2} />} />
          <Sep />
          <MenuRow label="Open in Terminal" icon={
            <svg viewBox="0 0 32 24" className="w-[32px] h-[24px]">
              <rect width="32" height="24" fill="#464646" />
              <rect width="12" height="4" fill="#cfcfcf" />
              <rect x="12" width="10" height="4" fill="#a8a8a8" />
              <rect x="22" width="10" height="4" fill="#7a7a7a" />
              <path d="M6 9l6 5-6 5" stroke="#e4e4e4" strokeWidth="2.6" fill="none" />
              <rect x="16" y="17" width="10" height="2.5" fill="#e4e4e4" />
            </svg>
          } />
          <Sep />
          <MenuRow label="Show more options" icon={
            <MenuIconSvg>
              <path d="M16 2H6Q3 2 3 5v18q0 3 3 3h20q3 0 3-3V13" stroke="#e0e0e0" />
              <path d="M3 14h9q3 0 3 3v9" stroke="#e0e0e0" />
              <path d="M18 12L29 2M20 2h9v9" stroke={blue} />
            </MenuIconSvg>
          } />
        </div>

        {/* New submenu */}
        <div className="absolute left-[1154px] top-[166px] w-[542px] h-[713px] rounded-[16px] bg-[#2c2c2c] border-2 border-[#373737] pt-[4px] shadow-[0_8px_24px_rgba(0,0,0,0.45)]">
          <SubRow label="Folder" icon={<Folder className="w-[28px] h-[24px]" />} />
          <SubRow label="Shortcut" icon={<Shortcut />} />
          <SubRow label="Microsoft Access Database" icon={<Page badge="A" badgeColor="#a4262c" />} />
          <SubRow label="Bitmap image" icon={<Page />} />
          <SubRow label="Microsoft Word Document" icon={<Page badge="W" badgeColor="#2b57b5" />} />
          <SubRow label="Microsoft Access Database" icon={<AccessKey />} />
          <SubRow label="Microsoft PowerPoint Presentation" icon={<Page />} />
          <SubRow label="Microsoft Publisher Document" icon={<Page badge="P" badgeColor="#1b7a87" />} />
          <SubRow label="Text Document" active icon={<Page lines />} />
          <SubRow label="Microsoft Excel Worksheet" icon={<Page />} />
          <SubRow label="Compressed (zipped) Folder" icon={<ZipFolder />} />
        </div>
      </div>
    </div>
  );
}
